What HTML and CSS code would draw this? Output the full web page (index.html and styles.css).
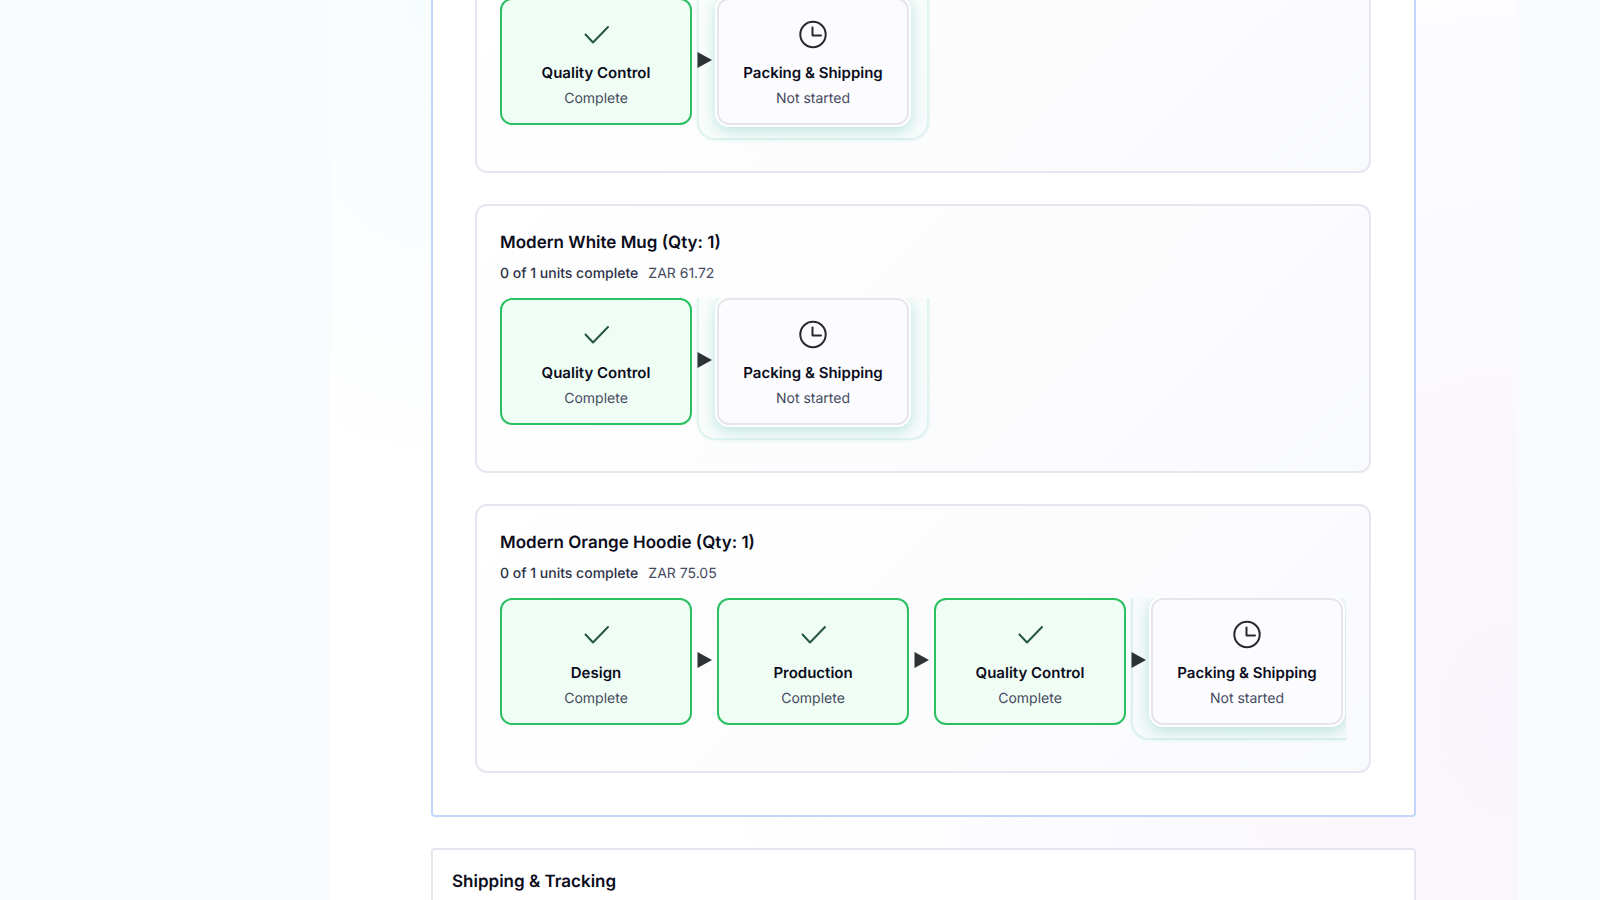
FILE: index.html
```
<!DOCTYPE html>
<html lang="en">
  <head>
    <meta charset="UTF-8" />
    <meta name="viewport" content="width=device-width, initial-scale=1.0" />
    <title>Order Progress</title>
    <link rel="stylesheet" href="styles.css">
  </head>
  <body>
    <svg width="0" height="0" class="icon-defs" aria-hidden="true">
      <symbol id="icon-check" viewBox="0 0 32 32">
        <path d="M5.500 16.500l7.500 8L28 9" />
      </symbol>
      <symbol id="icon-clock" viewBox="0 0 32 32">
        <circle cx="16" cy="16.500" r="12.700" />
        <path d="M15.500 9.500v8H24" />
      </symbol>
      <symbol id="icon-arrow" viewBox="0 0 15 16">
        <path d="M.5 0L15 8 .5 16z" />
      </symbol>
    </svg>

    <main class="order-page">
      <section class="panel is-active">
        <article class="item is-continued">
          <ol class="stages">
            <li class="stage is-complete">
              <svg class="stage-icon"><use href="#icon-check" /></svg>
              <h4 class="stage-name">Quality Control</h4>
              <p class="stage-status">Complete</p>
            </li>
            <li class="arrow"><svg><use href="#icon-arrow" /></svg></li>
            <li class="stage is-next">
              <svg class="stage-icon"><use href="#icon-clock" /></svg>
              <h4 class="stage-name">Packing &amp; Shipping</h4>
              <p class="stage-status">Not started</p>
            </li>
          </ol>
        </article>

        <article class="item">
          <h3 class="item-title">Modern White Mug (Qty: 1)</h3>
          <p class="item-meta"><strong>0 of 1 units complete</strong> <span>ZAR 61.72</span></p>
          <ol class="stages">
            <li class="stage is-complete">
              <svg class="stage-icon"><use href="#icon-check" /></svg>
              <h4 class="stage-name">Quality Control</h4>
              <p class="stage-status">Complete</p>
            </li>
            <li class="arrow"><svg><use href="#icon-arrow" /></svg></li>
            <li class="stage is-next">
              <svg class="stage-icon"><use href="#icon-clock" /></svg>
              <h4 class="stage-name">Packing &amp; Shipping</h4>
              <p class="stage-status">Not started</p>
            </li>
          </ol>
        </article>

        <article class="item">
          <h3 class="item-title">Modern Orange Hoodie (Qty: 1)</h3>
          <p class="item-meta"><strong>0 of 1 units complete</strong> <span>ZAR 75.05</span></p>
          <ol class="stages">
            <li class="stage is-complete">
              <svg class="stage-icon"><use href="#icon-check" /></svg>
              <h4 class="stage-name">Design</h4>
              <p class="stage-status">Complete</p>
            </li>
            <li class="arrow"><svg><use href="#icon-arrow" /></svg></li>
            <li class="stage is-complete">
              <svg class="stage-icon"><use href="#icon-check" /></svg>
              <h4 class="stage-name">Production</h4>
              <p class="stage-status">Complete</p>
            </li>
            <li class="arrow"><svg><use href="#icon-arrow" /></svg></li>
            <li class="stage is-complete">
              <svg class="stage-icon"><use href="#icon-check" /></svg>
              <h4 class="stage-name">Quality Control</h4>
              <p class="stage-status">Complete</p>
            </li>
            <li class="arrow"><svg><use href="#icon-arrow" /></svg></li>
            <li class="stage is-next">
              <svg class="stage-icon"><use href="#icon-clock" /></svg>
              <h4 class="stage-name">Packing &amp; Shipping</h4>
              <p class="stage-status">Not started</p>
            </li>
          </ol>
        </article>
      </section>

      <section class="panel is-shipping">
        <h2 class="panel-title">Shipping &amp; Tracking</h2>
      </section>
    </main>
  </body>
</html>
```
FILE: styles.css
```
:root {
  --page-bg: #fafbfd;
  --text-color: #0b0d1c;
  --muted-color: #454a5f;
  --line: #e5e6f0;
  --active-line: #c2d5fb;
  --done: #2bc163;
  --done-bg: #f0fdf4;
  --teal: 45, 180, 150;
}

*,
*::before,
*::after {
  box-sizing: border-box;
  margin: 0;
  padding: 0;
}

body {
  font-family: Inter, "Liberation Sans", sans-serif;
  text-rendering: geometricPrecision;
  color: var(--text-color);
  background-color: var(--page-bg);
  display: grid;
  grid-template-columns: 331px minmax(0, 1fr) 82px;
  height: 100vh;
  overflow: hidden;
}

.icon-defs {
  position: absolute;
}

.order-page {
  grid-column: 2;
  display: flex;
  flex-direction: column;
  gap: 31px;
  min-height: 0;
  padding: 0 102px 0 100px;
  background:
    radial-gradient(ellipse 300px 500px at 8% 0, #f7fcff, transparent),
    radial-gradient(ellipse 800px 1000px at 100% 80%, #f8f5fc, transparent),
    #ffffff;
}

.panel {
  border: 2px solid var(--line);
  border-radius: 4px;
  background-color: #ffffff;
}

.panel.is-active {
  display: flex;
  flex-direction: column;
  gap: 31px;
  flex-shrink: 0;
  margin-top: -2px;
  padding: 0 43px 42px 42px;
  border-color: var(--active-line);
  border-top: 0;
  border-radius: 0 0 4px 4px;
}

.panel.is-shipping {
  flex: 1 0 auto;
  padding: 20px 19px;
  border-bottom: 0;
  border-radius: 4px 4px 0 0;
}

.panel-title,
.item-title {
  font-size: 17px;
  font-weight: 600;
  line-height: 24px;
}

.item {
  position: relative;
  z-index: 0;
  padding: 25px 23px 22px;
  border: 2px solid var(--line);
  border-radius: 12px;
  background: linear-gradient(135deg, #ffffff, #f9fafc);
}

/* upper part is scrolled out of view */
.item.is-continued {
  padding-top: 0;
  border-top: 0;
  border-radius: 0 0 12px 12px;
}

.item-meta {
  display: flex;
  gap: 10px;
  margin: 9px 0 14px;
  font-size: 14px;
  line-height: 20px;
  color: var(--muted-color);
}

.item-meta strong {
  font-weight: 500;
  color: #2c3146;
}

.stages {
  position: relative;
  z-index: 0;
  display: flex;
  align-items: flex-start;
  gap: 5px;
  padding-bottom: 24px;
  list-style: none;
  overflow: hidden;
}

.stage {
  position: relative;
  flex: 0 0 192px;
  display: flex;
  flex-direction: column;
  align-items: center;
  padding: 18px 12px 14px;
  border: 2px solid #e5e5ea;
  border-radius: 12px;
  background-color: #fcfcfe;
  text-align: center;
}

.stage.is-complete {
  border-color: var(--done);
  background-color: var(--done-bg);
}

.stage.is-next {
  box-shadow:
    0 0 0 2px #ffffff,
    0 4px 14px 2px rgba(var(--teal), 0.3);
}

.stage.is-next::before {
  content: "";
  position: absolute;
  inset: -17px -22px;
  border: 2px solid rgba(var(--teal), 0.12);
  border-radius: 18px;
  box-shadow: 0 0 3px rgba(var(--teal), 0.12);
  background-color: rgba(var(--teal), 0.02);
  pointer-events: none;
  z-index: -1;
}

.stage-icon {
  width: 32px;
  height: 32px;
  margin-bottom: 11px;
  fill: none;
  stroke: #26282c;
  stroke-width: 2;
  stroke-linecap: round;
  stroke-linejoin: round;
}

.is-complete .stage-icon {
  stroke: #24583e;
}

.stage-name {
  font-size: 15px;
  font-weight: 600;
  line-height: 24px;
  white-space: nowrap;
}

.stage-status {
  margin-top: 4px;
  font-size: 14px;
  line-height: 20px;
  color: var(--muted-color);
}

.arrow {
  flex: 0 0 15px;
  align-self: center;
  height: 16px;
  margin-bottom: 3px;
  z-index: 1;
}

.arrow svg {
  display: block;
  width: 15px;
  height: 16px;
  fill: #2d3235;
}
```
